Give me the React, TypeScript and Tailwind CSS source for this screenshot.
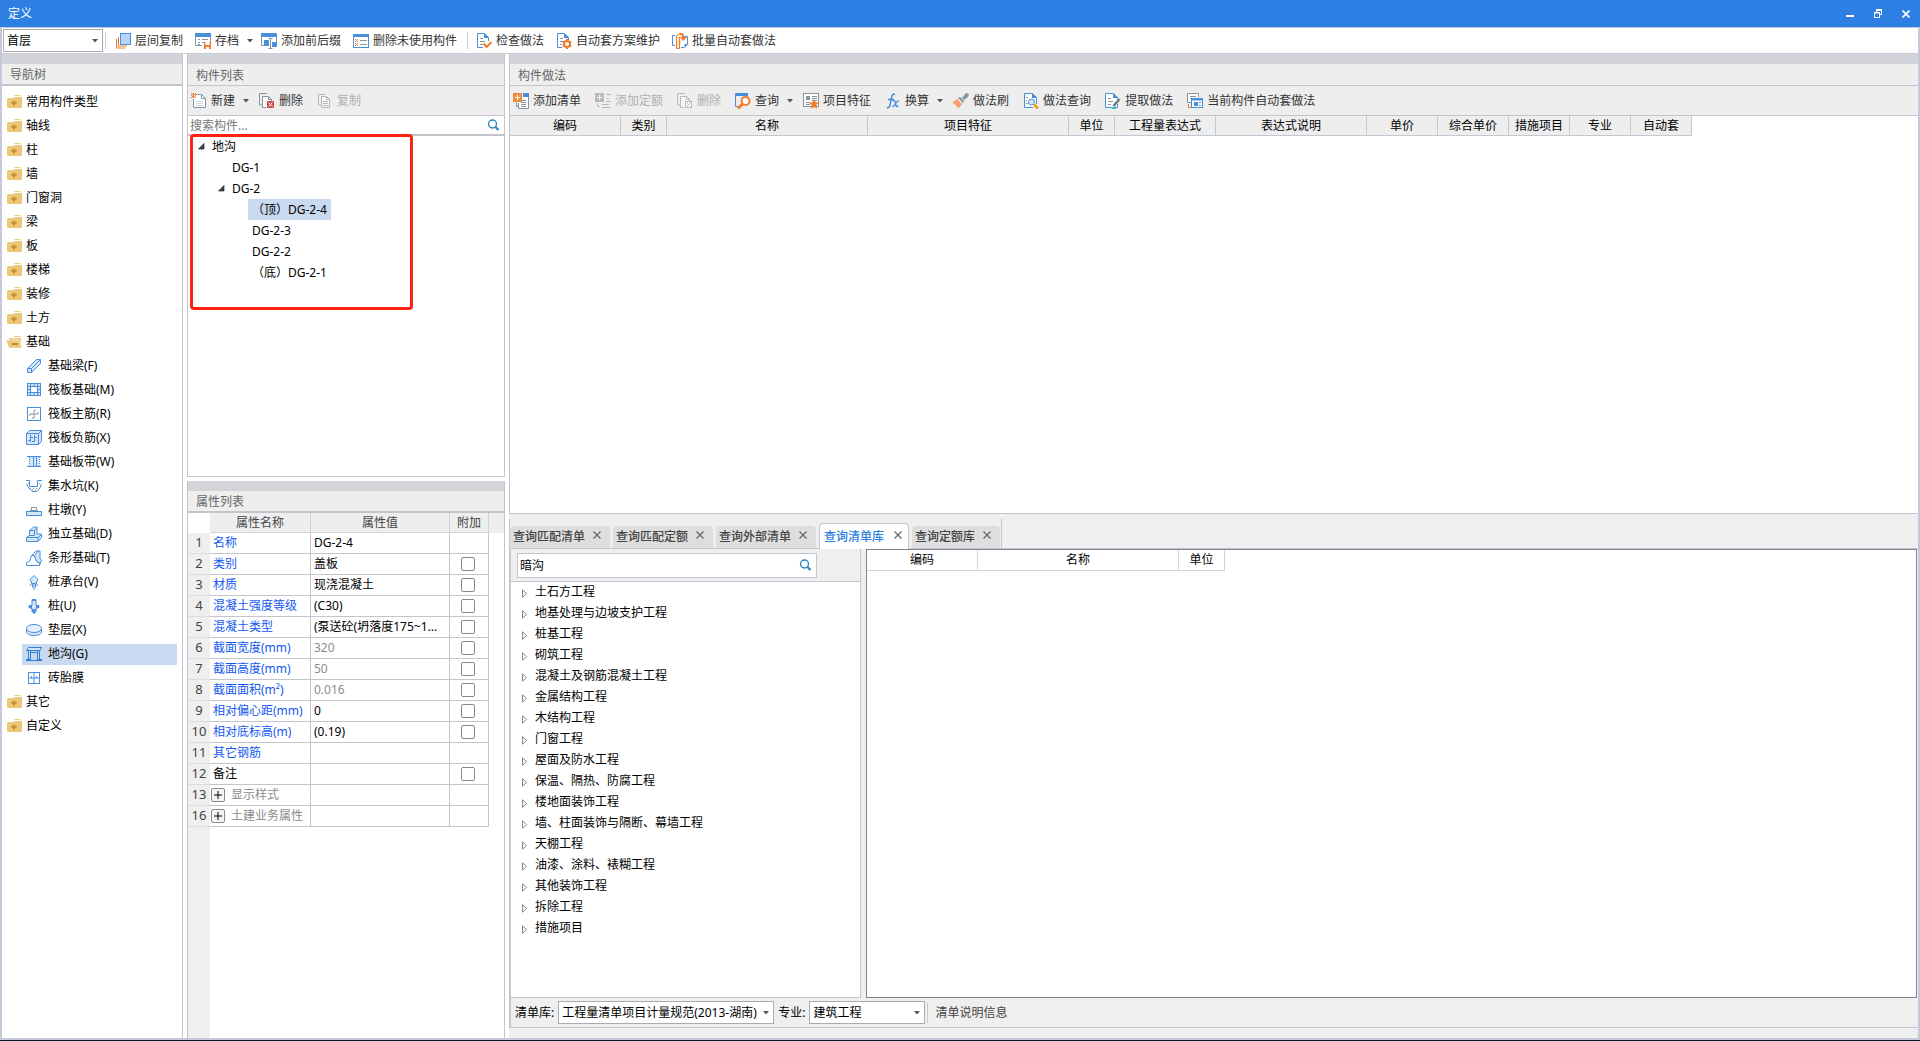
import type { ReactNode } from "react";

const B = "#4a8fdc";
const L = "#d5e6fa";
const O = "#f07d2d";
const S = "#8795a1";
const G = "#b9b9b9";

const icons: Record<string, ReactNode> = {
  floorCopy: (
    <>
      <path d="M1.5 6v9H10" stroke={O} />
      <path d="M3.5 4v9H12" stroke={O} />
      <rect x="5.5" y=".5" width="10" height="11" fill="#b5d5fa" stroke={B} />
    </>
  ),
  archive: (
    <>
      <path d="M.5 3v9.5H7M15.5 3v6" stroke={S} />
      <path d="M0 0h16v4H0z" fill={B} />
      <path d="M3 6.5h2M7 6.5h6M3 9.500h2M3 11.5h2M7 9.500h2" stroke={S} />
      <path d="M9 9h7v7H9z" fill={O} />
      <path d="M10.500 9h4v3h-4zM11 14h3v2h-3z" fill="#fff" />
    </>
  ),
  affix: (
    <>
      <path d="M.5 3v9.5H4M15.5 3v6" stroke={S} />
      <path d="M0 0h16v4H0z" fill={B} />
      <path d="M3 7h5v6H3zM11 9h5v5h-5z" fill={B} />
      <path d="M9.500 5v10M7.500 5.500h4M7.500 15.500h4" stroke={S} />
    </>
  ),
  unused: (
    <>
      <rect x=".5" y="1.500" width="15" height="13" fill="#fff" stroke={B} />
      <path d="M0 1h16v3H0z" fill={B} />
      <path d="M2 6h1v1H2zM4 6h1v1H4zM3 7h1v1H3zM2 8h1v1H2zM4 8h1v1H4zM2 10h1v1H2zM4 10h1v1H4zM3 11h1v1H3zM2 12h1v1H2zM4 12h1v1H4z" fill={O} />
      <path d="M7 7.500h7M7 11.500h7" stroke={S} />
    </>
  ),
  check: (
    <>
      <path d="M12.500 8V4.500l-4-4h-7v14H7" stroke={B} fill="#fff" />
      <path d="M8 0l5 5H8z" fill={B} />
      <path d="M4 5.500h3M4 8.500h5M4 11.500h3" stroke={S} />
      <path d="M7.500 10.500l3 3.500 5-5" stroke={O} strokeWidth="2" />
    </>
  ),
  scheme: (
    <>
      <path d="M12.500 7V4.500l-4-4h-7v14H6" stroke={B} fill="#fff" />
      <path d="M8 0l5 5H8z" fill={B} />
      <path d="M4 5.500h3M4 8.500h3M4 11.500h2" stroke={S} />
      <circle cx="11" cy="11" r="3" stroke={O} strokeWidth="2" />
      <path d="M11 6v2M11 14v2M6.700 8.500l1.700 1M13.600 12.500l1.700 1M6.700 13.500l1.700-1M13.600 9.500l1.700-1" stroke={O} strokeWidth="2" />
    </>
  ),
  batch: (
    <>
      <path d="M3 2.500H.5v10H3M12 3.500h3.500v8l-3 3H9" stroke={B} />
      <path d="M15.500 11h-3v3z" fill={B} />
      <path d="M7.500 15.500h-3v-13l3-2h3v4" stroke={O} fill="#fde3d0" />
      <path d="M7.500 4v11.500" stroke={O} />
      <path d="M7.500 1.500h4v3" stroke={O} />
      <path d="M8 4h7l-3.500 4z" fill={O} />
    </>
  ),
  newDoc: (
    <>
      <path d="M5 1.500h5.500l4 4v9h-12V6" fill="#fff" stroke={S} />
      <path d="M10.500 1.500v4h4" stroke={S} />
      <path d="M5 8.500h7M5 10.500h7M5 12.500h7" stroke="#d3d8dc" />
      <path d="M0 0h1v1H0zM2 0h1v1H2zM4 0h1v1H4zM1 1h3v1H1zM0 2h1v1H0zM2 2h1v1H2zM4 2h1v1H4zM1 3h3v1H1zM0 4h1v1H0zM2 4h1v1H2zM4 4h1v1H4z" fill={O} />
    </>
  ),
  delDoc: (
    <>
      <path d="M8 .5H.5V12H3" stroke={S} />
      <path d="M7 14.500H3.500v-11h6l3 3V8" fill="#fff" stroke={S} />
      <path d="M9.500 3.500v3h3" stroke={S} />
      <path d="M8 8h7v7H8z" fill="#cf4f4f" />
      <path d="M9.500 9.500l4 4M13.500 9.500l-4 4" stroke="#fff" />
    </>
  ),
  delDocGray: (
    <>
      <path d="M8 .5H.5V12H3" stroke={G} />
      <path d="M7 14.500H3.500v-11h6l3 3V8" fill="#f6f6f6" stroke={G} />
      <path d="M9.500 3.500v3h3" stroke={G} />
      <rect x="8.500" y="8.500" width="6" height="6" fill="#fff" stroke={G} />
      <path d="M9.500 9.500l4 4M13.500 9.500l-4 4" stroke={G} />
    </>
  ),
  copy: (
    <>
      <path d="M8 1.500H1.500V12H4" stroke={G} />
      <path d="M4.500 3.500h5l3 3v8h-8z" fill="#f6f6f6" stroke={G} />
      <path d="M9.500 3.500v3h3M6 8.500h5M6 10.500h5M6 12.500h5" stroke={G} />
    </>
  ),
  addList: (
    <>
      <path d="M10 3.500h5.500v12h-10V10" fill="#fff" stroke={S} />
      <path d="M3.500 10v3.500H5M8 7.500h5M8 9.500h5M8 11.500h5M8 13.500h5" stroke={S} />
      <path d="M10 0h6v4h-6z" fill={B} />
      <path d="M0 0h9v9H0z" fill="#ee8d3c" />
      <path d="M4.500 2v5M2 4.500h5" stroke="#fff" />
    </>
  ),
  addQuota: (
    <>
      <path d="M0 0h9v9H0z" fill={G} />
      <path d="M4.500 2v5M2 4.500h5" stroke="#fff" />
      <path d="M11 1.500h5M11 5.500h3M11 8.500h5M2.500 10v3.500H5M7 11.500h7M7 14.500h9" stroke={G} />
    </>
  ),
  query: (
    <>
      <path d="M.5 2v11.500H3M12.500 1v3" stroke={B} />
      <path d="M0 0h13v3H0z" fill={B} />
      <circle cx="10.500" cy="8" r="4" fill="#fff" stroke={O} strokeWidth="2" />
      <path d="M7.500 11L3 15.500" stroke={O} strokeWidth="3" />
    </>
  ),
  feature: (
    <>
      <rect x=".5" y=".5" width="15" height="13" fill="#fff" stroke={S} />
      <path d="M3 3h4v4H3z" fill={S} />
      <path d="M9 3.500h5M9 5.500h5M9 7.500h5M3 9.500h4M3 11.500h4" stroke={S} />
      <path d="M11 6l1.500 3.300 3.500.4-2.600 2.400.7 3.600L11 13.900l-3.100 1.800.7-3.600L6 9.700l3.500-.4z" fill={O} />
    </>
  ),
  fx: (
    <>
      <path d="M10 1.500C7.500 0 6.700 3 6 7s-1 8.500-4 7.500M3 6.500h6" stroke={B} strokeWidth="1.500" />
      <path d="M7.500 8c2-1.500 2.500 0 3 2.500s1 4 3 2.500M14 8c-2-.5-3 2-4 3.500S8.500 14 7 13.500" stroke={B} strokeWidth="1.300" />
    </>
  ),
  brush: (
    <>
      <path d="M0 9l4-3 5 5-3 4c-2 0-2-1-3-3-1 0-3-1-3-3z" fill="#fb9d72" />
      <path d="M5 5l2-1 4 4-1 2zM9 5l4-5 3 1-1 3-4 3z" fill={S} />
    </>
  ),
  methodQuery: (
    <>
      <path d="M13.500 11V4.500l-4-4h-8v14H10" stroke={B} fill="#fff" />
      <path d="M9 0l5 5H9z" fill={B} />
      <path d="M3 4.500h2M3 7.500h1M3 10.500h2" stroke={S} />
      <circle cx="8.500" cy="9" r="3" stroke={B} fill={L} />
      <path d="M11 11.500l4 4" stroke="#f09a1c" strokeWidth="2.500" />
    </>
  ),
  extract: (
    <>
      <path d="M12.500 6V4.500l-4-4h-8v14H7M12.500 11v3.500H10" stroke={B} fill="#fff" />
      <path d="M8 0l5 5H8z" fill={B} />
      <path d="M3 5.500h3M3 8.500h5M3 11.500h3" stroke={S} />
      <path d="M14.500 6L8.500 13" stroke="#6e7d88" strokeWidth="2.500" />
      <path d="M7 15.500l4-1" stroke="#2cb5c8" strokeWidth="2" />
    </>
  ),
  autoCurrent: (
    <>
      <path d="M4 9.500H.5v-9h11V4" stroke={S} fill="#fff" />
      <path d="M3 3.500h6M3 5.500h2" stroke={S} />
      <rect x="4.500" y="5.500" width="11" height="9" fill="#fff" stroke={B} />
      <path d="M4 5h12v2.500H4zM7 9h4v4H7z" fill={B} />
      <path d="M12 9.500h2M12 12.500h2" stroke={B} />
      <path d="M1.500 11v3.500H4" stroke={O} />
    </>
  ),
  folder: (
    <>
      <path d="M9 1h5l1 1H8z" fill="#ecc777" />
      <path d="M1 4h7V3h8v11H1z" fill="#ecc777" opacity=".35" />
      <path d="M2 4h13v10H2zM1 5h1v8H1zM15 3h1v10h-1zM8 3h8v1H8z" fill="#ecc777" />
      <path d="M8 6.500v5M5.500 9h5" stroke="#c08f34" strokeWidth="2" />
    </>
  ),
  folderOpen: (
    <>
      <path d="M8 2h7v1H8zM3 4h12v9H3z" fill="#ecc777" />
      <path d="M0 6h13l3 8H3z" fill="#ecc777" stroke="#fff" strokeWidth=".6" />
      <path d="M6 9h6v2H6z" fill="#c08f34" />
    </>
  ),
  beam: (
    <>
      <path d="M1.500 14.500v-4l9-9h4v4l-9 9z" fill={L} stroke={B} />
      <path d="M1.500 10.500h4v4M5.500 10.500l9-9" stroke={B} />
    </>
  ),
  raft: (
    <>
      <rect x="1.500" y="1.500" width="13" height="12" fill={L} stroke={B} />
      <rect x="4.500" y="4.500" width="7" height="6" fill="#fff" stroke={B} />
      <path d="M4.500 1v3M8 1v3M11.500 1v3M4.500 11v3M8 11v3M11.500 11v3M1 4.500h3M1 7.500h3M1 10.500h3M12 4.500h3M12 7.500h3M12 10.500h3" stroke={B} />
    </>
  ),
  raftMain: (
    <>
      <rect x="1.500" y="1.500" width="13" height="13" fill="#fff" stroke={B} />
      <path d="M8 12V5q0-1 2-1M4 10V8h8V6M8 12H6" stroke={S} />
    </>
  ),
  raftNeg: (
    <>
      <path d="M.5 3.500l3-3h12v11l-3 3H.5z" fill={L} stroke={B} />
      <path d="M12.500 3.500l3-3M12.500 3.500v11M.5 3.500h12" stroke={B} />
      <path d="M4.500 5v7M8.500 5v7M2 10.500h3M9 7.500h2M5 7.500h2M6 11.500h3" stroke={B} />
    </>
  ),
  strip: (
    <>
      <path d="M3 3h10v10H3z" fill={L} />
      <path d="M1 2.500h14M1 12.500h14" stroke={B} />
      <path d="M7.500 3v10M10.500 3v10" stroke={B} />
      <path d="M3.500 3v10M13.500 3v10" stroke={B} strokeDasharray="1 1" />
    </>
  ),
  pit: (
    <>
      <path d="M0 2.500h3.500v6h8v-6H16M.5 6l3 5 3 2.500h4l3-2.500 2-5" stroke={B} />
      <path d="M2 5.500h1M13 5.500h1M4 10.500h1M7 10.500h1M10 10.500h1M6 12h1M9 12h1" stroke={S} />
    </>
  ),
  pier: (
    <>
      <rect x=".5" y="9.500" width="15" height="4" fill={L} stroke={B} />
      <path d="M4 8.500h8M5.500 8V5.500h5V8" stroke={S} />
    </>
  ),
  isolated: (
    <>
      <path d="M.5 11.500l3-2V5l4-4h3.500v7h4.500v3.500l-3.500 4H.5z" fill={L} stroke={B} />
      <path d="M.5 11.500h11.500l3.500-3M3.500 9.500v-5h5l2.500-3M8.500 4.500v5h-5M12 11.500v4" stroke={B} />
    </>
  ),
  stripFound: (
    <>
      <path d="M.5 15.500v-3l3-1 2-6h3l2 6 3 1v3z" fill="#fff" stroke={B} />
      <path d="M8.500 5.500L12 1h2v8l1.500 1-2 5.500v-3l-3-1z" fill={L} stroke={B} />
      <path d="M5.500 5.500L10 1h2.500" stroke={B} />
    </>
  ),
  cap: (
    <>
      <path d="M8 1.500l4 4-2 4H6l-2-4z" fill={L} stroke={B} />
      <path d="M8 9v7M6 9l-2 3M10 9l2 3M6.500 9.500v4M9.500 9.500v4" stroke={B} />
    </>
  ),
  pile: (
    <>
      <path d="M6 1.500h4v6h3v2l-3 1v3l-2 2-2-2v-3l-3-1v-2h3z" fill={L} stroke={B} />
      <path d="M3 8h3v2H3zM10 8h3v2h-3zM6 11h4v2l-2 3-2-3zM6 1h4v2H6z" fill={B} />
    </>
  ),
  cushion: (
    <>
      <path d="M.5 7v3c0 2 3.300 3.500 7.500 3.500s7.500-1.500 7.500-3.500V7" fill={L} stroke={B} />
      <ellipse cx="8" cy="6.500" rx="7.500" ry="4" fill="#e6f1fd" stroke={B} />
    </>
  ),
  trench: (
    <>
      <path d="M.5 4.500l2-3h13l-1.500 3z" fill={L} stroke="#2e7fd6" />
      <path d="M2.500 5v8M4.500 5v8M11.500 5v8M13.500 4v9M4.500 6.500h7" stroke="#2e7fd6" />
      <path d="M0 13.500h5M11 13.500h5M0 14.500h16" stroke="#2e7fd6" />
    </>
  ),
  brick: (
    <>
      <rect x="2.500" y="2.500" width="11" height="11" fill="#fff" stroke={B} />
      <path d="M8 3v10M3 8h10M5.500 6v2M10.500 6v2" stroke={B} />
    </>
  ),
  search: (
    <>
      <circle cx="7.500" cy="7" r="4" stroke="#2a86bf" strokeWidth="1.400" />
      <path d="M10.500 10l3 3" stroke="#2a86bf" strokeWidth="2.200" />
    </>
  ),
};

function Icon({ name, cls = "size-4" }: { name: string; cls?: string }) {
  return (
    <svg viewBox="0 0 16 16" fill="none" className={"shrink-0 " + cls} aria-hidden="true">
      {icons[name]}
    </svg>
  );
}

function Caret({ cls = "" }: { cls?: string }) {
  return (
    <svg viewBox="0 0 6 4" className={"h-1 w-1.5 shrink-0 " + cls} aria-hidden="true">
      <path d="M0 0h6L3 3.500z" fill="#555" />
    </svg>
  );
}

type Tool = { icon: string; label: string; drop?: boolean; off?: boolean };

function ToolButton({ icon, label, drop, off, tight }: Tool & { tight?: boolean }) {
  const pad = tight ? (drop ? "pr-2 " : "pr-3 ") : drop ? "pr-2.5 " : "pr-3.5 ";
  return (
    <button
      type="button"
      disabled={off}
      className={"flex h-6 shrink-0 items-center gap-1 " + pad + (off ? "text-[#b0b0b0]" : "text-[#333]")}
    >
      <Icon name={icon} />
      {label}
      {drop && <Caret cls="ml-1" />}
    </button>
  );
}

function PanelTitle({ title, line = "border-b" }: { title: string; line?: string }) {
  return (
    <>
      <div className="h-2.5 shrink-0 bg-[#d3d4da]" />
      <h2 className={"flex h-[22px] shrink-0 items-center border-[#c3c5cb] bg-[#eee] px-2 pt-0.5 text-[#666] " + line}>{title}</h2>
    </>
  );
}

function Select({ label, value, cls }: { label: string; value: string; cls: string }) {
  return (
    <span className={"relative flex h-[23px] shrink-0 items-center border border-[#a9abb0] bg-white " + cls}>
      <select aria-label={label} className="h-full w-full appearance-none truncate bg-transparent pl-[3px] pr-3 outline-none">
        <option>{value}</option>
      </select>
      <Caret cls="pointer-events-none absolute right-1" />
    </span>
  );
}

const mainTools: Tool[] = [
  { icon: "floorCopy", label: "层间复制" },
  { icon: "archive", label: "存档", drop: true },
  { icon: "affix", label: "添加前后缀" },
  { icon: "unused", label: "删除未使用构件" },
];
const autoTools: Tool[] = [
  { icon: "check", label: "检查做法" },
  { icon: "scheme", label: "自动套方案维护" },
  { icon: "batch", label: "批量自动套做法" },
];
const listTools: Tool[] = [
  { icon: "newDoc", label: "新建", drop: true },
  { icon: "delDoc", label: "删除" },
  { icon: "copy", label: "复制", off: true },
];
const methodTools: Tool[] = [
  { icon: "addList", label: "添加清单" },
  { icon: "addQuota", label: "添加定额", off: true },
  { icon: "delDocGray", label: "删除", off: true },
  { icon: "query", label: "查询", drop: true },
  { icon: "feature", label: "项目特征" },
  { icon: "fx", label: "换算", drop: true },
  { icon: "brush", label: "做法刷" },
  { icon: "methodQuery", label: "做法查询" },
  { icon: "extract", label: "提取做法" },
  { icon: "autoCurrent", label: "当前构件自动套做法" },
];

const folders = ["常用构件类型", "轴线", "柱", "墙", "门窗洞", "梁", "板", "楼梯", "装修", "土方"];
const foundation = [
  ["beam", "基础梁(F)"],
  ["raft", "筏板基础(M)"],
  ["raftMain", "筏板主筋(R)"],
  ["raftNeg", "筏板负筋(X)"],
  ["strip", "基础板带(W)"],
  ["pit", "集水坑(K)"],
  ["pier", "柱墩(Y)"],
  ["isolated", "独立基础(D)"],
  ["stripFound", "条形基础(T)"],
  ["cap", "桩承台(V)"],
  ["pile", "桩(U)"],
  ["cushion", "垫层(X)"],
  ["trench", "地沟(G)"],
  ["brick", "砖胎膜"],
];

function NavFolder({ label, open }: { label: string; open?: boolean }) {
  return (
    <button type="button" className="flex h-6 w-full items-center gap-1 pl-1">
      <Icon name={open ? "folderOpen" : "folder"} />
      {label}
    </button>
  );
}

function NavTree() {
  return (
    <nav aria-label="导航树" className="flex w-[181px] shrink-0 flex-col border-r border-[#c3c5cb]">
      <PanelTitle title="导航树" line="border-b-2" />
      <ul className="min-h-0 flex-1 overflow-hidden pt-1">
        {folders.map((f) => (
          <li key={f}>
            <NavFolder label={f} />
          </li>
        ))}
        <li>
          <NavFolder label="基础" open />
          <ul className="pl-5 pr-[5px]">
            {foundation.map(([icon, label]) => (
              <li key={label} className="flex h-6 items-center">
                <button
                  type="button"
                  className={"flex h-[21px] w-full items-center gap-1.5 pl-1 " + (icon === "trench" ? "bg-[#c9d9ef]" : "")}
                >
                  <Icon name={icon} />
                  {label}
                </button>
              </li>
            ))}
          </ul>
        </li>
        <li>
          <NavFolder label="其它" />
        </li>
        <li>
          <NavFolder label="自定义" />
        </li>
      </ul>
    </nav>
  );
}

function OpenMark() {
  return (
    <svg viewBox="0 0 7 7" className="size-[7px] shrink-0" aria-hidden="true">
      <path d="M6 .5v5.500H.5z" fill="#444" stroke="#111" strokeWidth=".6" />
    </svg>
  );
}

const parts = ["（顶）DG-2-4", "DG-2-3", "DG-2-2", "（底）DG-2-1"];

function PartList() {
  return (
    <section className="flex min-h-0 flex-[422] flex-col border-x border-b border-[#c3c5cb]">
      <PanelTitle title="构件列表" />
      <div className="flex h-[30px] shrink-0 items-center border-b border-[#c3c5cb] bg-[#eee] pl-[3px]">
        {listTools.map((t) => (
          <ToolButton key={t.label} {...t} />
        ))}
      </div>
      <div className="flex h-5 shrink-0 items-center border-b-2 border-[#c3c5cb] pr-[3px]">
        <input aria-label="搜索构件" placeholder="搜索构件..." className="h-full w-full min-w-0 pl-0.5 outline-none placeholder:text-[#777]" />
        <Icon name="search" />
      </div>
      <div className="relative min-h-0 flex-1">
        <div className="pointer-events-none absolute -top-0.5 left-0.5 h-44 w-[223px] rounded-sm border-[3px] border-[#ff2012]" />
        <ul className="pl-px leading-[21px]">
          <li className="flex items-center gap-[7px] pl-[9px]">
            <OpenMark />
            地沟
          </li>
          <li className="pl-[43px]">DG-1</li>
          <li className="flex items-center gap-[7px] pl-[29px]">
            <OpenMark />
            DG-2
          </li>
          {parts.map((p, i) => (
            <li key={p} className="pl-[59px]">
              <span className={"inline-block px-1 " + (i === 0 ? "bg-[#c9d9ef]" : "")}>{p}</span>
            </li>
          ))}
        </ul>
      </div>
    </section>
  );
}

type Prop = { n: number; name: string; value?: string; box?: boolean; kind?: "black" | "group"; dim?: boolean };
const props: Prop[] = [
  { n: 1, name: "名称", value: "DG-2-4" },
  { n: 2, name: "类别", value: "盖板", box: true },
  { n: 3, name: "材质", value: "现浇混凝土", box: true },
  { n: 4, name: "混凝土强度等级", value: "(C30)", box: true },
  { n: 5, name: "混凝土类型", value: "(泵送砼(坍落度175~1...", box: true },
  { n: 6, name: "截面宽度(mm)", value: "320", box: true, dim: true },
  { n: 7, name: "截面高度(mm)", value: "50", box: true, dim: true },
  { n: 8, name: "截面面积(m²)", value: "0.016", box: true, dim: true },
  { n: 9, name: "相对偏心距(mm)", value: "0", box: true },
  { n: 10, name: "相对底标高(m)", value: "(0.19)", box: true },
  { n: 11, name: "其它钢筋" },
  { n: 12, name: "备注", box: true, kind: "black" },
  { n: 13, name: "显示样式", kind: "group" },
  { n: 16, name: "土建业务属性", kind: "group" },
];

function PropertyList() {
  const cell = "h-[21px] border-b border-r border-[#c3c5cb] p-0 ";
  return (
    <section className="flex min-h-0 flex-[557] flex-col border-x border-[#c3c5cb]">
      <PanelTitle title="属性列表" line="border-b-2" />
      <div className="min-h-0 flex-1 overflow-hidden bg-[linear-gradient(to_right,#efefef_22px,white_22px)]">
        <table className="w-full table-fixed border-separate border-spacing-0">
          <colgroup>
            <col className="w-[22px]" />
            <col className="w-[101px]" />
            <col className="w-[139px]" />
            <col className="w-[39px]" />
            <col />
          </colgroup>
          <thead>
            <tr className="bg-[#eee] text-[#444]">
              <td className="h-5 bg-white p-0" />
              {["属性名称", "属性值", "附加"].map((h) => (
                <th key={h} className="border-b border-r border-[#d0d2d6] p-0 font-normal">
                  {h}
                </th>
              ))}
              <td className="p-0" />
            </tr>
          </thead>
          <tbody>
            {props.map((p) => (
              <tr key={p.n}>
                <td className="border-b border-[#dcdde0] p-0 text-center text-[13px] text-[#444]">{p.n}</td>
                <td className={cell + (p.kind === "black" ? "text-black" : p.kind === "group" ? "text-[#8c8c8c]" : "text-[#1458f0]")}>
                  <div className={"flex items-center whitespace-nowrap " + (p.kind === "group" ? "gap-1.5 pl-px" : "pl-[3px]")}>
                    {p.kind === "group" && (
                      <button
                        type="button"
                        aria-label={"展开" + p.name}
                        className="flex size-3.5 shrink-0 items-center justify-center rounded-xs border border-[#8a8a8a] bg-[#f4f4f4]"
                      >
                        <svg viewBox="0 0 8 8" className="size-2" aria-hidden="true">
                          <path d="M3.500 0h1v3.500H8v1H4.500V8h-1V4.500H0v-1h3.500z" fill="#000" />
                        </svg>
                      </button>
                    )}
                    {p.name}
                  </div>
                </td>
                <td className={cell + (p.dim ? "text-[#8c8c8c]" : "text-black")}>
                  <div className="truncate pl-[3px]">{p.value}</div>
                </td>
                <td className={cell}>
                  {p.box && (
                    <input
                      type="checkbox"
                      aria-label={"附加" + p.name}
                      className="ml-[11px] block size-3.5 appearance-none rounded-xs border border-[#8a8a8a] bg-white"
                    />
                  )}
                </td>
                <td className="p-0" />
              </tr>
            ))}
          </tbody>
        </table>
      </div>
    </section>
  );
}

function MethodPanel() {
  const th = "border-b border-r border-[#c3c8d3] bg-[#eee] p-0 font-normal";
  return (
    <section className="flex min-h-0 flex-[459] flex-col border-b border-l border-[#c3c5cb]">
      <PanelTitle title="构件做法" />
      <div className="flex h-[30px] shrink-0 items-center border-b border-[#c3c5cb] bg-[#eee] pl-[3px]">
        {methodTools.map((t) => (
          <ToolButton key={t.label} {...t} />
        ))}
      </div>
      <table className="w-[1182px] table-fixed border-separate border-spacing-0">
        <colgroup>
          <col className="w-[111px]" />
          <col className="w-[46px]" />
          <col className="w-[201px]" />
          <col className="w-[201px]" />
          <col className="w-[46px]" />
          <col className="w-[101px]" />
          <col className="w-[151px]" />
          <col className="w-[71px]" />
          <col className="w-[71px]" />
          <col className="w-[61px]" />
          <col className="w-[61px]" />
          <col className="w-[61px]" />
        </colgroup>
        <thead>
          <tr className="h-5">
            {["编码", "类别", "名称", "项目特征", "单位", "工程量表达式", "表达式说明", "单价", "综合单价", "措施项目", "专业", "自动套"].map((h) => (
              <th key={h} className={th}>
                {h}
              </th>
            ))}
          </tr>
        </thead>
      </table>
    </section>
  );
}

const tabs = ["查询匹配清单", "查询匹配定额", "查询外部清单", "查询清单库", "查询定额库"];
const chapters = [
  "土石方工程",
  "地基处理与边坡支护工程",
  "桩基工程",
  "砌筑工程",
  "混凝土及钢筋混凝土工程",
  "金属结构工程",
  "木结构工程",
  "门窗工程",
  "屋面及防水工程",
  "保温、隔热、防腐工程",
  "楼地面装饰工程",
  "墙、柱面装饰与隔断、幕墙工程",
  "天棚工程",
  "油漆、涂料、裱糊工程",
  "其他装饰工程",
  "拆除工程",
  "措施项目",
];

function Cross() {
  return (
    <svg viewBox="0 0 8 8" className="size-2" aria-hidden="true">
      <path d="M.5.5l7 7M7.500.5l-7 7" stroke="#666" strokeWidth="1.200" />
    </svg>
  );
}

function QueryPanel() {
  return (
    <section className="flex min-h-0 flex-[524] flex-col bg-[#efefef]">
      <div className="mt-[5px] flex h-[30px] shrink-0 border-b border-[#c3c6cf]">
        <div className="flex items-end gap-[3px] border-x border-[#c3c6cf] pr-px">
          {tabs.map((t) => {
            const on = t === "查询清单库";
            return (
              <div
                key={t}
                className={
                  "flex items-center rounded-t-sm " +
                  (on ? "-mb-px h-[26px] border-x border-t border-[#c3c6cf] bg-white pl-1 pr-1.5" : "h-[22px] bg-[#dedede] pl-[3px] pr-[9px]")
                }
              >
                <button type="button" className={on ? "mr-2.5 font-medium text-[#2a7de1]" : "mr-2 font-medium text-[#444]"}>
                  {t}
                </button>
                <button type="button" aria-label={"关闭" + t} className="mb-1">
                  <Cross />
                </button>
              </div>
            );
          })}
        </div>
      </div>
      <div className="flex min-h-0 flex-1 border-l-2 border-[#c3c6cf]">
        <div className="flex w-[350px] shrink-0 flex-col border-b border-r border-[#c3c6cf]">
          <div className="flex h-[33px] shrink-0 items-center border-b border-[#c3c6cf] pl-1.5">
            <div className="flex h-[25px] w-[300px] items-center border border-[#c3c6cf] bg-white pr-[3px]">
              <input aria-label="搜索清单" defaultValue="暗沟" className="h-full w-full min-w-0 pl-0.5 outline-none" />
              <Icon name="search" />
            </div>
          </div>
          <ul className="min-h-0 flex-1 overflow-hidden bg-white leading-[21px]">
            {chapters.map((c) => (
              <li key={c} className="flex h-[21px] items-center gap-[7px] pb-0.5 pl-[11px]">
                <svg viewBox="0 0 6 9" className="mt-1 h-[9px] w-1.5 shrink-0" aria-hidden="true">
                  <path d="M.5.800v7.400l4-3.700z" fill="#fff" stroke="#888" />
                </svg>
                {c}
              </li>
            ))}
          </ul>
        </div>
        <div className="ml-[5px] mr-px min-w-0 flex-1 border border-[#80838c] bg-white">
          <table className="w-[358px] table-fixed border-separate border-spacing-0">
            <colgroup>
              <col className="w-[111px]" />
              <col className="w-[201px]" />
              <col className="w-[46px]" />
            </colgroup>
            <thead>
              <tr className="h-[21px]">
                {["编码", "名称", "单位"].map((h) => (
                  <th key={h} className="border-b border-r border-[#d3d4d8] p-0 font-normal">
                    {h}
                  </th>
                ))}
              </tr>
            </thead>
          </table>
        </div>
      </div>
      <div className="mb-2.5 flex h-[30px] shrink-0 items-center border-b border-l-2 border-[#c3c6cf] pl-1">
        <span>清单库:</span>
        <Select label="清单库" value="工程量清单项目计量规范(2013-湖南)" cls="ml-1 w-[216px]" />
        <span className="ml-1">专业:</span>
        <Select label="专业" value="建筑工程" cls="ml-1 w-[116px]" />
        <span className="ml-0.5 mr-[7px] h-5 w-px bg-[#c9cbd0]" />
        <button type="button" className="text-[#444]">
          清单说明信息
        </button>
      </div>
    </section>
  );
}

export default function App() {
  return (
    <div className="flex h-screen flex-col overflow-hidden border-b border-[#0b1a24] bg-white font-['Noto_Sans','Noto_Sans_CJK_SC',sans-serif] text-xs text-black">
      <header className="flex h-7 shrink-0 items-center justify-between border-b border-[#c3c9d8] bg-[#2d7fe3] pl-2 pr-1.5 text-white">
        <h1>定义</h1>
        <div className="flex items-center gap-3">
          <button type="button" aria-label="最小化" className="flex size-4 items-center justify-center">
            <svg viewBox="0 0 8 8" className="size-2" aria-hidden="true">
              <path d="M0 5h8v2H0z" fill="#fff" />
            </svg>
          </button>
          <button type="button" aria-label="还原" className="flex size-4 items-center justify-center">
            <svg viewBox="0 0 8 9" className="h-[9px] w-2" fill="none" aria-hidden="true">
              <path d="M2.500 3V.5h5v5H6M.5 3.500h5v5h-5z" stroke="#fff" />
              <path d="M2 0h6v2H2zM0 3h6v1.500H0z" fill="#fff" />
            </svg>
          </button>
          <button type="button" aria-label="关闭" className="flex size-4 items-center justify-center">
            <svg viewBox="0 0 8 8" className="size-2" aria-hidden="true">
              <path d="M.5.5l7 7M7.500.5l-7 7" stroke="#fff" strokeWidth="1.600" />
            </svg>
          </button>
        </div>
      </header>
      <div className="flex min-h-0 flex-1 flex-col border-x-2 border-b-2 border-[#c3c9d8]">
        <div className="flex h-[26px] shrink-0 items-center border-b border-[#c9ccd2]">
          <Select label="楼层" value="首层" cls="ml-px w-[100px]" />
          <span className="ml-0.5 mr-[9px] h-[17px] w-px bg-[#c9cbd0]" />
          {mainTools.map((t) => (
            <ToolButton key={t.label} {...t} tight />
          ))}
          <span className="-ml-0.5 mr-2 h-[17px] w-px bg-[#c9cbd0]" />
          {autoTools.map((t) => (
            <ToolButton key={t.label} {...t} tight />
          ))}
        </div>
        <main className="flex min-h-0 flex-1">
          <NavTree />
          <div className="ml-1 flex w-[318px] shrink-0 flex-col gap-1">
            <PartList />
            <PropertyList />
          </div>
          <div className="ml-1 flex min-w-0 flex-1 flex-col">
            <MethodPanel />
            <QueryPanel />
          </div>
        </main>
      </div>
    </div>
  );
}
